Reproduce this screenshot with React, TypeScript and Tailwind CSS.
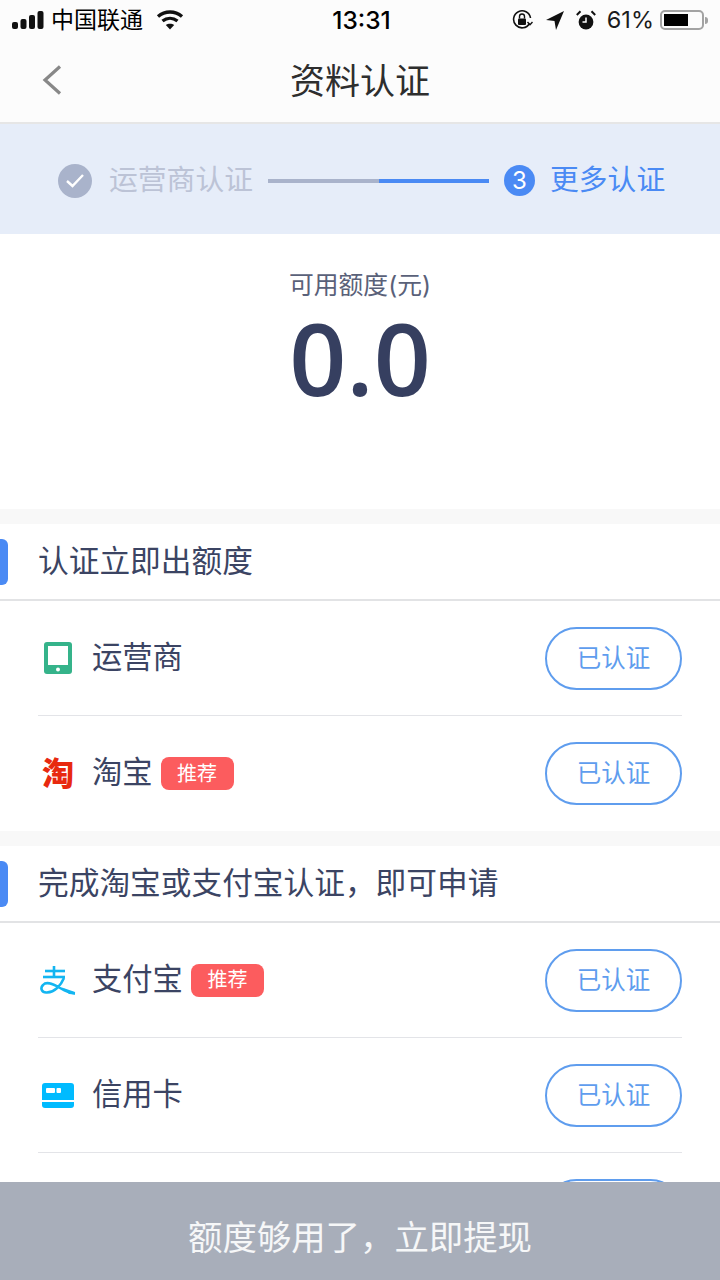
const CJK = "font-['Inter','Noto_Sans_CJK_SC',sans-serif]"

function StatusBar() {
  return (
    <div className="flex h-[40px] items-center justify-between pl-[12px] pr-[12px] text-black">
      <div className="flex w-[240px] items-center">
        <svg width="32" height="18" viewBox="0 0 32 18" fill="#111">
          <rect x="0" y="11" width="6" height="7" rx="2" />
          <rect x="8.5" y="8" width="6" height="10" rx="2" />
          <rect x="17" y="4" width="6" height="14" rx="2" />
          <rect x="25.5" y="0" width="6" height="18" rx="2" />
        </svg>
        <span className="ml-[7px] text-[23px] leading-none">中国联通</span>
        <svg className="ml-[13px]" width="28" height="20" viewBox="0 0 28 20" fill="none" stroke="#111" strokeWidth="3.4">
          <path d="M2 6.5 C9 0.5 19 0.5 26 6.5" />
          <path d="M6.5 11 C11 7.5 17 7.5 21.5 11" />
          <path d="M14 19.5 L9.8 15 C12 13.2 16 13.2 18.2 15 Z" fill="#111" stroke="none" />
        </svg>
      </div>
      <span className="ml-[3px] text-[24.5px] font-medium leading-none">13:31</span>
      <div className="flex w-[240px] items-center justify-end">
        <svg width="22" height="22" viewBox="0 0 22 22" fill="none" stroke="#111" strokeWidth="1.6">
          <path d="M18.5 14.5 A8.5 8.5 0 1 1 19.5 9" />
          <path d="M16.5 13 L19 15.8 L21.5 13" strokeWidth="1.4" />
          <rect x="7" y="9.5" width="8" height="6.5" rx="1" fill="#111" stroke="none" />
          <path d="M8.5 9.5 V7.5 A2.5 2.5 0 0 1 13.5 7.5 V9.5" strokeWidth="1.4" />
        </svg>
        <svg className="ml-[13px]" width="18" height="19" viewBox="0 0 18 19" fill="#111">
          <path d="M18 0 L0 9 L8.5 10 L10 19 Z" />
        </svg>
        <svg className="ml-[12px]" width="20" height="21" viewBox="0 0 20 21">
          <circle cx="10" cy="12" r="7.4" fill="#111" />
          <path d="M10 7.5 V12 H6.5" fill="none" stroke="#fff" strokeWidth="1.5" />
          <path d="M0.8 5 L4.5 1.3 M19.2 5 L15.5 1.3" stroke="#111" strokeWidth="2" />
        </svg>
        <span className="ml-[11px] text-[23.5px] leading-none text-[#1c1c1c]">61%</span>
        <div className="ml-[6px] flex items-center">
          <div className="h-[20px] w-[44px] rounded-[5px] border-2 border-[#a3a3a3] p-[2px]">
            <div className="h-full w-[24px] bg-black" />
          </div>
          <div className="ml-[1px] h-[7px] w-[3px] rounded-r-full bg-[#a3a3a3]" />
        </div>
      </div>
    </div>
  )
}

function CheckedStep() {
  return (
    <div className="flex items-center">
      <div className="flex size-[34px] items-center justify-center rounded-full bg-[#a9b3cb]">
        <svg width="20" height="15" viewBox="0 0 20 15" fill="none" stroke="#fff" strokeWidth="2.4">
          <path d="M2 8 L7.5 13 L18 2" />
        </svg>
      </div>
      <span className="ml-[17px] text-[28.8px] leading-none text-[#bcc3d6]">运营商认证</span>
    </div>
  )
}

function Stepper() {
  return (
    <div className="flex h-[110px] items-center bg-[#e6edf9] pl-[58px] pt-[3px]">
      <CheckedStep />
      <div className="ml-[15px] flex h-[4px] w-[221px]">
        <div className="h-full w-1/2 bg-[#a9b3cb]" />
        <div className="h-full w-1/2 bg-[#4a8af4]" />
      </div>
      <div className="ml-[15px] flex size-[31px] items-center justify-center rounded-full bg-[#4a8af4] text-[24px] leading-none text-white">3</div>
      <span className="ml-[15px] text-[28.8px] leading-none text-[#4a8af4]">更多认证</span>
    </div>
  )
}

function SectionHeader({ title }: { title: string }) {
  return (
    <div className="flex h-[77px] items-center border-b-2 border-[#e2e3e5]">
      <div className="h-[46px] w-[8px] rounded-r-[6px] bg-[#4a8af4]" />
      <span className="ml-[30px] text-[30.7px] leading-none text-[#3b4463]">{title}</span>
    </div>
  )
}

function CarrierIcon() {
  return (
    <svg width="28" height="32" viewBox="0 0 28 32">
      <rect width="28" height="32" rx="3" fill="#35b38a" />
      <rect x="4" y="4" width="20" height="19" fill="#fff" />
      <circle cx="14" cy="27.5" r="2" fill="#fff" />
    </svg>
  )
}

function TaobaoIcon() {
  return <span className="text-[32px] font-black leading-none text-[#e8290f]">淘</span>
}

function AlipayIcon() {
  return (
    <svg width="36" height="30" viewBox="0 0 36 30" fill="none" stroke="#13b5f1" strokeWidth="2.6">
      <path d="M14 1 V12" />
      <path d="M5 6 H25" />
      <path d="M3 12 H25" />
      <path d="M24 13 C21 20 15 27 7 27.5 C1.5 28 0 23 3 20 C7 15.5 15 20 21 23.5 C25 26 30 28 35 28.5" />
      <path d="M22 22.5 L35 27 V29.5 L29 29 Z" fill="#13b5f1" stroke="none" />
    </svg>
  )
}

function CardIcon() {
  return (
    <svg width="32" height="25" viewBox="0 0 32 25">
      <path d="M3 0 H29 A3 3 0 0 1 32 3 V17 H0 V3 A3 3 0 0 1 3 0 Z" fill="#00bbff" />
      <rect x="4" y="5" width="9" height="5" rx="1" fill="#fff" />
      <rect x="14.5" y="5" width="4.5" height="5" rx="1" fill="#fff" />
      <path d="M0 19 H32 V22 A3 3 0 0 1 29 25 H3 A3 3 0 0 1 0 22 Z" fill="#00bbff" />
    </svg>
  )
}

function AuthRow({ icon, name, hot, last }: { icon?: React.ReactNode; name?: string; hot?: boolean; last?: boolean }) {
  return (
    <div className={['mx-[38px] flex h-[115px] items-center', last ? '' : 'border-b border-[#e3e4e8]'].join(' ')}>
      <div className="flex w-[40px] justify-center">{icon}</div>
      <span className="-mt-[2px] ml-[14px] text-[30.3px] leading-none text-[#3b4463]">{name}</span>
      {hot && (
        <span className="ml-[8px] flex h-[33px] w-[73px] items-center justify-center rounded-[8px] bg-[#fc5c5e] text-[20px] leading-none text-white">
          推荐
        </span>
      )}
      <button className="ml-auto h-[63px] w-[137px] rounded-full border-2 border-[#5f9dee] text-[24.5px] leading-none text-[#5f9dee]">
        已认证
      </button>
    </div>
  )
}

export default function App() {
  return (
    <div className={`${CJK} relative h-[1280px] w-[720px] overflow-hidden bg-white`}>
      <div className="h-[124px] border-b-2 border-[#e6e6e6] bg-[#fcfcfc]">
        <StatusBar />
        <div className="relative flex h-[82px] items-center justify-center">
          <svg className="absolute left-[42px] top-[25px]" width="20" height="30" viewBox="0 0 20 30" fill="none" stroke="#888888" strokeWidth="3.2">
            <path d="M18 1.5 L3 15 L18 28.5" />
          </svg>
          <span className="text-[35px] leading-none text-[#2e2e2e]">资料认证</span>
        </div>
      </div>

      <Stepper />

      <div className="flex h-[275px] flex-col items-center">
        <span className="mt-[39px] text-[24.8px] leading-none text-[#5a6179]">可用额度(元)</span>
        <span className="mt-[19px] font-['Open_Sans',sans-serif] text-[100px] font-semibold leading-[80px] text-[#363f60]">0.0</span>
      </div>

      <div className="h-[15px] bg-[#f8f8f8]" />
      <SectionHeader title="认证立即出额度" />
      <AuthRow icon={<CarrierIcon />} name="运营商" />
      <AuthRow icon={<TaobaoIcon />} name="淘宝" hot last />

      <div className="h-[15px] bg-[#f8f8f8]" />
      <SectionHeader title="完成淘宝或支付宝认证，即可申请" />
      <AuthRow icon={<AlipayIcon />} name="支付宝" hot />
      <AuthRow icon={<CardIcon />} name="信用卡" />
      <AuthRow last />

      {/* fixed withdraw bar over the list */}
      <div className="absolute bottom-0 left-0 flex h-[98px] w-full items-center justify-center bg-[#a8aeba] pt-[14px] text-[34.4px] leading-none text-white/90">
        额度够用了，立即提现
      </div>
    </div>
  )
}
